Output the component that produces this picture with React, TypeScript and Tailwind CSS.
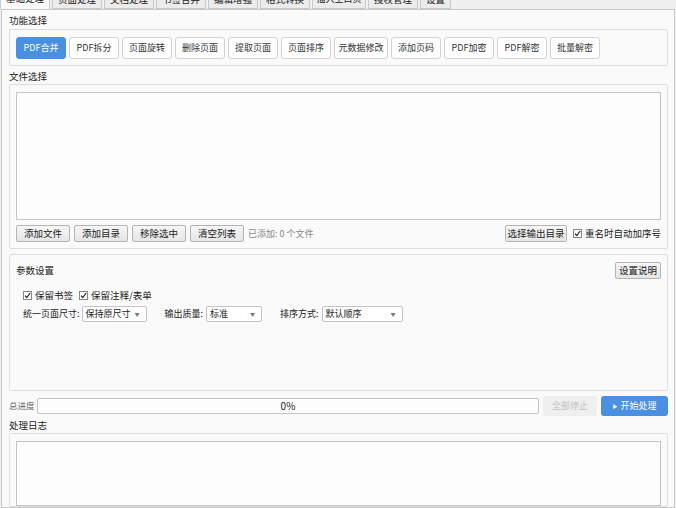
import React from "react";

const tabs = ["基础处理", "页面处理", "文档处理", "书签合并", "编辑增强", "格式转换", "插入空白页", "授权管理", "设置"];
const funcs = ["PDF合并", "PDF拆分", "页面旋转", "删除页面", "提取页面", "页面排序", "元数据修改", "添加页码", "PDF加密", "PDF解密", "批量解密"];

function GrayButton({ label, className = "" }: { label: string; className?: string }) {
  return (
    <button className={`h-[17px] px-0 whitespace-nowrap border border-[#b4b4b4] rounded-[2px] bg-gradient-to-b from-[#f6f6f6] to-[#e6e6e6] text-[9.5px] leading-none text-[#222] ${className}`}>
      {label}
    </button>
  );
}

function Check({ label }: { label: string }) {
  return (
    <label className="flex items-center gap-[3px] text-[9.5px] text-[#222] whitespace-nowrap">
      <span className="w-[9px] h-[9px] border border-[#888] bg-white flex items-center justify-center">
        <svg width="7" height="7" viewBox="0 0 7 7">
          <path d="M1 3.6 L2.8 5.6 L6.2 1" fill="none" stroke="#222" strokeWidth="1.2" />
        </svg>
      </span>
      {label}
    </label>
  );
}

function Select({ value, w }: { value: string; w: string }) {
  return (
    <div className={`${w} h-[16px] border border-[#c4c4c4] rounded-[2px] bg-white flex items-center justify-between px-[3px] text-[9px] text-[#222] whitespace-nowrap`}>
      <span>{value}</span>
      <span className="text-[5px] text-[#777] mr-[3px]">▼</span>
    </div>
  );
}

export default function App() {
  return (
    <div
      className="w-[676px] h-[508px] overflow-hidden bg-[#f0f0f0] flex flex-col whitespace-nowrap"
      style={{ fontFamily: '"Noto Sans CJK SC", "Noto Sans", sans-serif' }}
    >
      {/* tab strip, clipped at the top */}
      <div className="h-[9px] flex items-end overflow-hidden shrink-0">
        {tabs.map((t, i) => (
          <div
            key={t}
            className={`border border-[#c8c8c8] flex items-center justify-center text-[9.5px] text-[#222] mr-[2px] ${
              i === 0 ? "bg-[#fafafa] border-b-0 h-[22px]" : "bg-[#ececec] h-[20px]"
            } ${t === "插入空白页" ? "w-[54px] text-[9px]" : t === "设置" ? "w-[31px]" : "w-[50px]"}`}
          >
            {t}
          </div>
        ))}
      </div>

      <div className="flex-1 ml-[1px] mr-[1px] border border-[#c8c8c8] bg-[#fafafa] pl-[7px] pr-[6px] flex flex-col">
        <div className="h-[19px] pt-[3px] text-[9.5px] text-[#222] leading-[14px]">功能选择</div>
        <div className="h-[37px] border border-[#dedede] rounded-[2px] px-[6px] flex items-center gap-[3px]">
          {funcs.map((f, i) => (
            <button
              key={f}
              className={`h-[22px] px-0 rounded-[3px] text-[9px] leading-none whitespace-nowrap ${
                i === 0
                  ? "bg-[#4a90e2] text-white border border-[#4a90e2]"
                  : "bg-white text-[#333] border border-[#d4d4d4]"
              } ${f === "元数据修改" ? "w-[54px]" : "w-[50px]"}`}
            >
              {f}
            </button>
          ))}
        </div>

        <div className="h-[18px] pt-[3px] text-[9.5px] text-[#222] leading-[14px]">文件选择</div>
        <div className="h-[165px] border border-[#dedede] rounded-[2px] px-[6px] pt-[7px] flex flex-col">
          <div className="h-[128px] border border-[#c4c4c4] bg-[#fdfdfd]" />
          <div className="mt-[5px] flex items-center">
            <div className="flex items-center gap-[4px]">
              <GrayButton label="添加文件" className="w-[54px]" />
              <GrayButton label="添加目录" className="w-[54px]" />
              <GrayButton label="移除选中" className="w-[54px]" />
              <GrayButton label="清空列表" className="w-[54px]" />
              <span className="text-[9px] text-[#888]">已添加: 0 个文件</span>
            </div>
            <div className="ml-auto flex items-center gap-[6px]">
              <GrayButton label="选择输出目录" className="w-[62px]" />
              <Check label="重名时自动加序号" />
            </div>
          </div>
        </div>

        <div className="mt-[5px] h-[137px] border border-[#dedede] rounded-[2px] px-[6px] bg-[#fafafa]">
          <div className="pt-[7px] flex items-center justify-between">
            <span className="text-[9.5px] text-[#222]">参数设置</span>
            <GrayButton label="设置说明" className="w-[46px]" />
          </div>
          <div className="pl-[7px] mt-[9px] h-[14px] flex items-center gap-[6px]">
            <Check label="保留书签" />
            <Check label="保留注释/表单" />
          </div>
          <div className="pl-[7px] mt-[4px] flex items-center text-[9px] text-[#222]">
            <span className="mr-[2px]">统一页面尺寸:</span>
            <Select value="保持原尺寸" w="w-[65px]" />
            <span className="ml-[18px] mr-[3px]">输出质量:</span>
            <Select value="标准" w="w-[56px]" />
            <span className="ml-[18px] mr-[3px]">排序方式:</span>
            <Select value="默认顺序" w="w-[81px]" />
          </div>
        </div>

        <div className="mt-[4px] h-[21px] flex items-center">
          <span className="text-[8.5px] text-[#666] w-[28px]">总进度</span>
          <div className="w-[502px] h-[16px] border border-[#c4c4c4] rounded-[2px] bg-[#fdfdfd] flex items-center justify-center text-[10px] text-[#222]">
            0%
          </div>
          <button className="ml-[4px] w-[54px] h-[20px] rounded-[3px] bg-[#efefef] text-[9px] text-[#c0c0c0]">全部停止</button>
          <button className="ml-[4px] w-[67px] h-[20px] rounded-[3px] bg-[#4a90e2] text-[9px] text-white flex items-center justify-center gap-[3px]">
            <span className="text-[5px]">▶</span>开始处理
          </button>
        </div>

        <div className="h-[17px] pt-[2px] text-[9.5px] text-[#222] leading-[14px]">处理日志</div>
        <div className="flex-1 border border-[#dedede] rounded-[2px] px-[6px] pt-[7px] flex flex-col">
          <div className="flex-1 border border-[#c4c4c4] bg-[#fdfdfd]" />
        </div>
      </div>
    </div>
  );
}
